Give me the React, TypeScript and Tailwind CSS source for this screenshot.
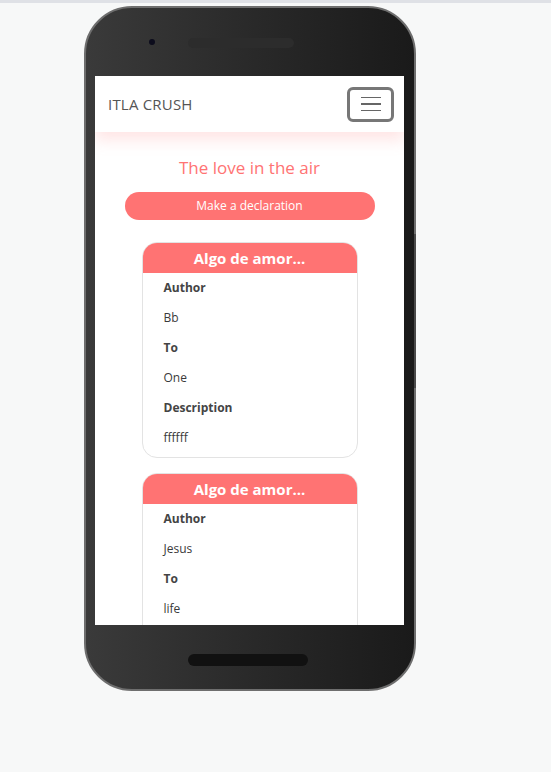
import React from "react";

const font = { fontFamily: '"Open Sans", "Noto Sans", sans-serif' };

function Card({ author, to, desc }: { author: string; to: string; desc?: string }) {
  return (
    <div className="mx-auto w-[216px] rounded-[15px] border border-[#e3e3e3] overflow-hidden bg-white">
      <div className="h-[30px] bg-[#ff7373] flex items-center justify-center text-white font-bold text-[15px]">
        Algo de amor...
      </div>
      <div className="pl-[21px] text-[12px] text-[#3a3a3a] pb-[4px]">
        <div className="h-[30px] flex items-center font-bold text-[#444]">Author</div>
        <div className="h-[30px] flex items-center">{author}</div>
        <div className="h-[30px] flex items-center font-bold text-[#444]">To</div>
        <div className="h-[30px] flex items-center">{to}</div>
        {desc !== undefined ? (
          <>
            <div className="h-[30px] flex items-center font-bold text-[#444]">Description</div>
            <div className="h-[30px] flex items-center">{desc}</div>
          </>
        ) : (
          <div className="h-[60px]" />
        )}
      </div>
    </div>
  );
}

export default function App() {
  return (
    <div className="w-[551px] h-[772px] bg-[#f7f8f8] relative overflow-hidden" style={font}>
      <div className="h-[3px] bg-[#dfe1e6]" />
      <div className="pl-[84px] pt-[3px]">
        <div className="relative w-[332px] h-[685px] rounded-[48px] border-2 border-[#6e6e6e] bg-gradient-to-r from-[#3a3a3a] to-[#1a1a1a] px-[9px] pt-[68px]">
          <div className="absolute left-[63px] top-[31px] w-[6px] h-[6px] rounded-full bg-[#0c0c1c]" />
          <div className="absolute left-[102px] top-[30px] w-[106px] h-[10px] rounded-full bg-[#2c2c2c]" />
          <div className="absolute left-[102px] top-[646px] w-[120px] h-[12px] rounded-full bg-[#111]" />
          <div className="absolute right-[-2px] top-[226px] w-[2px] h-[70px] bg-[#4a4a4a]" />
          <div className="absolute right-[-2px] top-[296px] w-[2px] h-[84px] bg-[#4a4a4a]" />
          <div className="w-[309px] h-[549px] bg-white overflow-hidden">
            <div className="h-[56px] flex items-center justify-between pl-[13px] pr-[10px] bg-white shadow-[0_8px_14px_rgba(255,150,150,0.25)] relative">
              <span className="text-[15px] text-[#555] tracking-[0.2px]">ITLA CRUSH</span>
              <div className="w-[47px] h-[35px] border-[3px] border-[#777] rounded-[6px] flex flex-col items-center justify-center gap-[5px]">
                <div className="w-[20px] h-[1.5px] bg-[#666]" />
                <div className="w-[20px] h-[1.5px] bg-[#666]" />
                <div className="w-[20px] h-[1.5px] bg-[#666]" />
              </div>
            </div>
            <div className="pt-[24px] text-center text-[17px] text-[#ff7373] leading-[24px]">The love in the air</div>
            <div className="mt-[12px] mx-auto w-[250px] h-[28px] rounded-full bg-[#ff7373] text-white text-[12px] flex items-center justify-center">
              Make a declaration
            </div>
            <div className="mt-[22px] flex flex-col gap-[15px]">
              <Card author="Bb" to="One" desc="ffffff" />
              <Card author="Jesus" to="life" />
            </div>
          </div>
        </div>
      </div>
    </div>
  );
}
